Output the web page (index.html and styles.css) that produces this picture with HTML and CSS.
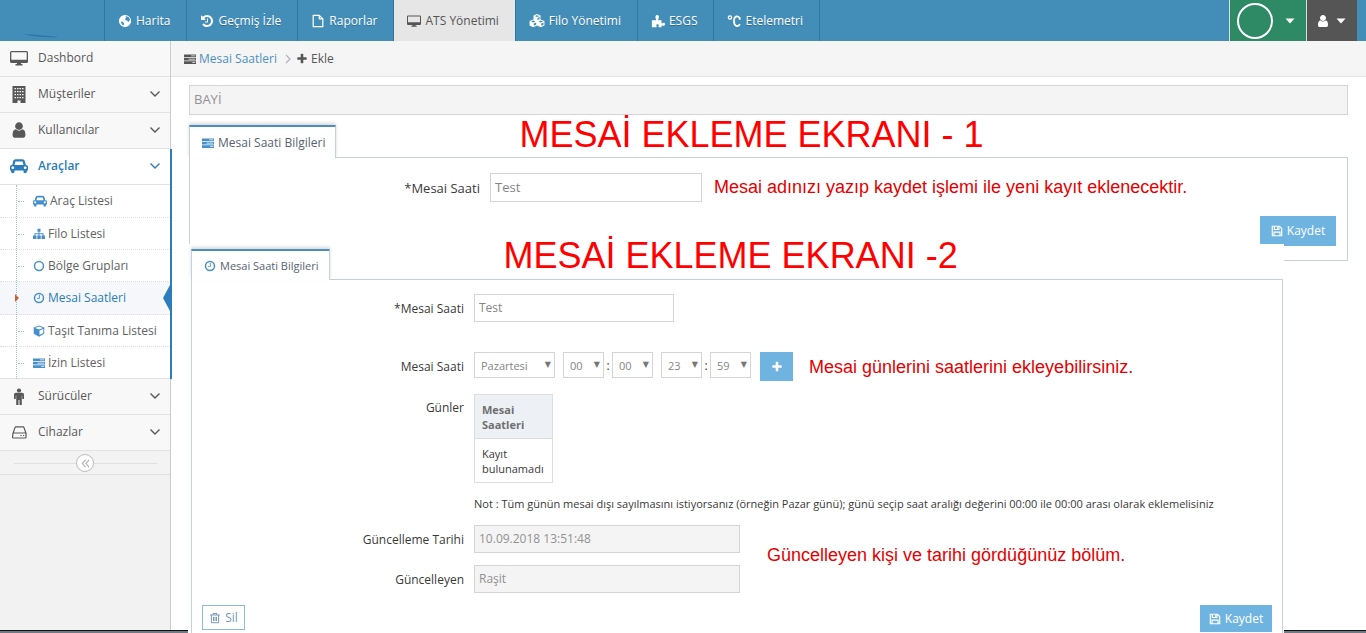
FILE: index.html
```html
<!DOCTYPE html>
<html lang="tr">
<head>
<meta charset="utf-8">
<title>Mesai Saatleri</title>
<link rel="stylesheet" href="styles.css">
</head>
<body>
<svg class="sprite" aria-hidden="true">
  <symbol id="globe" viewBox="0 0 16 16"><path fill-rule="evenodd" d="M8 1a7 7 0 1 0 0 14A7 7 0 0 0 8 1zM8.500 2.300l3.500 1.200 1.700 2.500-.7 2-1.500 1-1-1.500-2-.5-.5-1.500 1.500-1zM3 8.500l2.500.5 1.500 1.500-.5 2.500-2-1z"/></symbol>
  <symbol id="history" viewBox="0 0 1792 1792"><path d="M1664 896q0 156-61 298t-164 245-245 164-298 61q-172 0-327-72.500t-264-204.500q-7-10-6.500-22.500t8.500-20.500l137-138q10-9 25-9 16 2 23 12 73 95 179 147t225 52q104 0 198.500-40.500t163.500-109.500 109.500-163.500 40.500-198.500-40.500-198.500-109.500-163.500-163.500-109.500-198.500-40.500q-98 0-188 35.500t-160 101.500l137 138q31 30 14 69-17 40-59 40h-448q-26 0-45-19t-19-45v-448q0-42 40-59 39-17 69 14l130 129q107-101 244.500-156.500t284.500-55.500q156 0 298 61t245 164 164 245 61 298zm-640-288v448q0 14-9 23t-23 9h-320q-14 0-23-9t-9-23v-64q0-14 9-23t23-9h224v-352q0-14 9-23t23-9h64q14 0 23 9t9 23z"/></symbol>
  <symbol id="file" viewBox="0 0 16 16"><path d="M2.500 1.500h7l4 4v9h-11zM9.500 1.500v4h4" fill="none" stroke="currentColor" stroke-width="1.400" stroke-linejoin="round"/></symbol>
  <symbol id="desktop" viewBox="0 0 18 16"><path fill-rule="evenodd" d="M1.500 1h15A1.500 1.500 0 0 1 18 2.500v9a1.500 1.500 0 0 1-1.500 1.500H11v1h1.500v1.500h-7V14H7v-1H1.500A1.500 1.500 0 0 1 0 11.500v-9A1.500 1.500 0 0 1 1.500 1zM1.300 2.300v7.400h15.400V2.300z"/></symbol>
  <symbol id="cubes" viewBox="0 0 18 16"><path fill-rule="evenodd" d="M9 0l4 1.700v4.500l4.500 1.900v5L13.300 15 9 13.200 4.700 15 .5 13.100v-5L5 6.200V1.700zM9 1.300L6.500 2.400 9 3.400l2.500-1zM9.600 4.500v2.300L12 5.700V3.500zM4.700 7.500L2.200 8.600l2.500 1.100 2.500-1.100zM5.300 10.800v2.600L8 12.200V9.700zM13.300 7.500l-2.500 1.100 2.500 1.100 2.500-1.100zM13.900 10.800v2.600l2.500-1.200V9.700z"/></symbol>
  <symbol id="puzzle" viewBox="0 0 16 16"><path d="M1 7h4.500c.8 0 .4-1 0-1.700C4.600 3.500 5 1 7 1s2.500 2.500 1.600 4.300c-.3.700-.7 1.700.2 1.700H12v3c0 .9 1 .6 1.700.3 1-.5 2.300 0 2.300 1.500s-1.300 2-2.300 1.500c-.7-.3-1.700-.4-1.700.5V15H9c-.8 0-.5-.8-.2-1.500.4-1-.2-1.800-1.300-1.800s-1.800.8-1.300 1.800c.3.700.6 1.500-.3 1.500H1z"/></symbol>
  <symbol id="celsius" viewBox="0 0 16 16"><g fill="none" stroke="currentColor"><circle cx="3.400" cy="4" r="1.900" stroke-width="1.500"/><path d="M14.500 6.500V3.800M14.500 5.500C13.800 1.500 8 1.500 8 8s5 7 6.800 3.500" stroke-width="2"/></g></symbol>
  <symbol id="user" viewBox="0 0 1792 1792"><path d="M1536 1399q0 109-62.500 187t-150.500 78h-854q-88 0-150.500-78t-62.500-187q0-85 8.500-160.500t31.500-152 58.500-131 94-89 134.500-34.500q131 128 313 128t313-128q76 0 134.500 34.500t94 89 58.500 131 31.500 152 8.500 160.500zm-256-887q0 159-112.500 271.500t-271.500 112.500-271.500-112.500-112.500-271.500 112.500-271.500 271.500-112.500 271.500 112.500 112.500 271.500z"/></symbol>
  <symbol id="caret" viewBox="0 0 10 6"><path d="M.5 .5h9L5 5.500z"/></symbol>
  <symbol id="building" viewBox="0 0 16 18"><path fill-rule="evenodd" d="M1.500 1h13v17h-5v-2.500h-3V18h-5zM3.500 3v1.200H5V3zm2.500 0v1.200h1.500V3zm2.500 0v1.200H10V3zM11 3v1.200h1.500V3zM3.500 6v1.200H5V6zM6 6v1.200h1.500V6zm2.500 0v1.200H10V6zM11 6v1.200h1.500V6zM3.500 9v1.200H5V9zM6 9v1.200h1.500V9zm2.500 0v1.200H10V9zM11 9v1.200h1.500V9zm-7.500 3v1.200H5V12zM6 12v1.200h1.500V12zm2.500 0v1.200H10V12zm2.500 0v1.200h1.500V12z"/></symbol>
  <symbol id="car" viewBox="0 0 2048 1792"><path d="M480 1088q0-66-47-113t-113-47-113 47-47 113 47 113 113 47 113-47 47-113zm36-320h1016l-89-357q-2-8-14-17.500t-21-9.500h-768q-9 0-21 9.500t-14 17.500zm1372 320q0-66-47-113t-113-47-113 47-47 113 47 113 113 47 113-47 47-113zm160-96v384q0 14-9 23t-23 9h-96v128q0 80-56 136t-136 56-136-56-56-136v-128h-1024v128q0 80-56 136t-136 56-136-56-56-136v-128h-96q-14 0-23-9t-9-23v-384q0-93 65.500-158.500t158.500-65.500h28l105-419q23-94 104-157.500t179-63.500h768q98 0 179 63.500t104 157.500l105 419h28q93 0 158.500 65.500t65.500 158.500z"/></symbol>
  <symbol id="sitemap" viewBox="0 0 16 16"><path d="M6 1h4v4H8.600v2H14v3h2v4.500h-4.600V10h1.400V8.200H8.600V10h1.700v4.500H5.700V10h1.700V8.200H3.200V10h1.400v4.500H0V10h2V7h5.400V5H6z"/></symbol>
  <symbol id="circle" viewBox="0 0 16 16"><circle cx="8" cy="8" r="6" fill="none" stroke="currentColor" stroke-width="2"/></symbol>
  <symbol id="clock" viewBox="0 0 16 16"><g fill="none" stroke="currentColor"><circle cx="8" cy="8" r="6" stroke-width="2"/><path d="M8.500 4v4.700H5.500" stroke-width="1.200"/></g></symbol>
  <symbol id="cube" viewBox="0 0 16 16"><path fill-rule="evenodd" d="M8 .5l7 2.700v8.600l-7 3.700-7-3.700V3.200zM8 1.900L2.800 3.900 8 5.900l5.200-2zM8.700 7.200v6.200l5-2.600V5.300z"/></symbol>
  <symbol id="tasks" viewBox="0 0 16 16"><path fill-rule="evenodd" d="M0 2h16v3.500H0zM9.500 3.300v1h5.500v-1zM0 6.500h16V10H0zM6 7.800v1h9v-1zM0 11h16v3.500H0zM11 12.300v1h4v-1z"/></symbol>
  <symbol id="male" viewBox="0 0 16 18"><circle cx="8" cy="3.500" r="2.100"/><path d="M5 5.800h6c1.200 0 2 .8 2 2V12h-1.800V8.500h-.4V18H8.500v-5h-1v5H5.200V8.500h-.4V12H3V7.800c0-1.200.8-2 2-2z"/></symbol>
  <symbol id="hdd" viewBox="0 0 18 18"><path d="M3 10.200L5 4.600q.2-.7 1-.7h7q.8 0 1 .7l2 5.600v4q0 .8-.8.800H3.300q-.8 0-.8-.8zM3 10h13M10.500 12.500h1.200M13 12.500h1.200" fill="none" stroke="currentColor" stroke-width="1.200"/></symbol>
  <symbol id="down" viewBox="0 0 12 8"><path d="M1.500 1.500L6 6l4.500-4.500" fill="none" stroke="currentColor" stroke-width="1.400"/></symbol>
  <symbol id="plus" viewBox="0 0 1792 1792"><path d="M1600 736v192q0 40-28 68t-68 28h-416v416q0 40-28 68t-68 28h-192q-40 0-68-28t-28-68v-416h-416q-40 0-68-28t-28-68v-192q0-40 28-68t68-28h416v-416q0-40 28-68t68-28h192q40 0 68 28t28 68v416h416q40 0 68 28t28 68z"/></symbol>
  <symbol id="right" viewBox="0 0 6 10"><path d="M1 1l4 4-4 4" fill="none" stroke="currentColor" stroke-width="1.300"/></symbol>
  <symbol id="dleft" viewBox="0 0 10 10"><path d="M5 1L1.500 5 5 9M9 1L5.500 5 9 9" fill="none" stroke="currentColor" stroke-width="1.200"/></symbol>
  <symbol id="save" viewBox="0 0 16 16"><path d="M1.700 1.700h9.600l3 3v9.600H1.700zM4.500 2v4h6V2M4 14V9.500h8V14M8.700 3v2" fill="none" stroke="currentColor" stroke-width="1.500"/></symbol>
  <symbol id="trash" viewBox="0 0 16 16"><path d="M1.500 4h13M5.500 4V2h5v2M3.200 4v10.300h9.600V4M6 6.500v5.500M8 6.500v5.500M10 6.500v5.500" fill="none" stroke="currentColor" stroke-width="1.300"/></symbol>
</svg>

<header class="topbar">
  <a class="brand" href="#" aria-label="Ana sayfa"><svg viewBox="0 0 36 4"><path d="M0 0q16 1 36 3q-20 1-36-3z" fill="#2f74a3"/></svg></a>
  <nav class="menu">
    <a href="#"><svg class="icon"><use href="#globe"/></svg>Harita</a>
    <a href="#"><svg class="icon"><use href="#history"/></svg>Geçmiş İzle</a>
    <a href="#"><svg class="icon"><use href="#file"/></svg>Raporlar</a>
    <a href="#" class="current"><svg class="icon"><use href="#desktop"/></svg>ATS Yönetimi</a>
    <a href="#"><svg class="icon wide"><use href="#cubes"/></svg>Filo Yönetimi</a>
    <a href="#"><svg class="icon"><use href="#puzzle"/></svg>ESGS</a>
    <a href="#"><svg class="icon"><use href="#celsius"/></svg>Etelemetri</a>
  </nav>
  <div class="account">
    <button type="button" class="company" aria-label="Firma"><span class="ring"></span><svg class="caret"><use href="#caret"/></svg></button>
    <button type="button" class="profile" aria-label="Profil"><svg class="icon"><use href="#user"/></svg><svg class="caret"><use href="#caret"/></svg></button>
  </div>
</header>

<div class="shell">
  <aside class="sidebar">
    <nav>
      <a class="item" href="#"><svg class="icon big"><use href="#desktop"/></svg><span>Dashbord</span></a>
      <a class="item" href="#"><svg class="icon big"><use href="#building"/></svg><span>Müşteriler</span><svg class="arrow"><use href="#down"/></svg></a>
      <a class="item" href="#"><svg class="icon big"><use href="#user"/></svg><span>Kullanıcılar</span><svg class="arrow"><use href="#down"/></svg></a>
      <div class="group">
        <a class="item open" href="#"><svg class="icon big"><use href="#car"/></svg><span>Araçlar</span><svg class="arrow"><use href="#down"/></svg></a>
        <div class="sub">
          <a href="#"><svg class="icon"><use href="#car"/></svg>Araç Listesi</a>
          <a href="#"><svg class="icon small"><use href="#sitemap"/></svg>Filo Listesi</a>
          <a href="#"><svg class="icon small"><use href="#circle"/></svg>Bölge Grupları</a>
          <a href="#" class="active"><svg class="icon small"><use href="#clock"/></svg>Mesai Saatleri</a>
          <a href="#"><svg class="icon small"><use href="#cube"/></svg>Taşıt Tanıma Listesi</a>
          <a href="#"><svg class="icon small"><use href="#tasks"/></svg>İzin Listesi</a>
        </div>
      </div>
      <a class="item" href="#"><svg class="icon big"><use href="#male"/></svg><span>Sürücüler</span><svg class="arrow"><use href="#down"/></svg></a>
      <a class="item" href="#"><svg class="icon big"><use href="#hdd"/></svg><span>Cihazlar</span><svg class="arrow"><use href="#down"/></svg></a>
    </nav>
    <div class="collapse"><button type="button" aria-label="Menüyü daralt"><svg><use href="#dleft"/></svg></button></div>
  </aside>

  <main class="main">
    <nav class="crumbs">
      <svg class="icon small"><use href="#tasks"/></svg><a href="#">Mesai Saatleri</a>
      <svg class="sep"><use href="#right"/></svg>
      <svg class="icon small"><use href="#plus"/></svg><span>Ekle</span>
    </nav>
    <div class="content">
      <input class="dealer" type="text" value="BAYİ" aria-label="Bayi" disabled>

      <section class="screen first">
        <div class="tabs">
          <button type="button" class="tab"><svg class="icon small"><use href="#tasks"/></svg>Mesai Saati Bilgileri</button>
          <h1 class="title">MESAİ EKLEME EKRANI - 1</h1>
        </div>
        <form class="panel">
          <div class="row">
            <label for="name1">*Mesai Saati</label>
            <input id="name1" class="name" type="text" value="Test">
            <p class="note">Mesai adınızı yazıp kaydet işlemi ile yeni kayıt eklenecektir.</p>
          </div>
          <div class="actions"><button type="button" class="save"><svg class="icon small"><use href="#save"/></svg>Kaydet</button></div>
        </form>
      </section>

      <section class="screen second">
        <div class="tabs">
          <button type="button" class="tab"><svg class="icon small"><use href="#clock"/></svg>Mesai Saati Bilgileri</button>
          <h2 class="title">MESAİ EKLEME EKRANI -2</h2>
        </div>
        <form class="panel">
          <div class="row">
            <label for="name2">*Mesai Saati</label>
            <input id="name2" class="name" type="text" value="Test">
          </div>
          <div class="row hours">
            <label for="day">Mesai Saati</label>
            <div class="times">
              <span class="pick day"><select id="day"><option>Pazartesi</option></select></span>
              <span class="pick"><select aria-label="Başlangıç saati"><option>00</option></select></span>
              <span class="colon">:</span>
              <span class="pick"><select aria-label="Başlangıç dakikası"><option>00</option></select></span>
              <span class="pick end"><select aria-label="Bitiş saati"><option>23</option></select></span>
              <span class="colon">:</span>
              <span class="pick"><select aria-label="Bitiş dakikası"><option>59</option></select></span>
            </div>
            <button type="button" class="add" aria-label="Ekle"><svg class="icon small"><use href="#plus"/></svg></button>
            <p class="note">Mesai günlerini saatlerini ekleyebilirsiniz.</p>
          </div>
          <div class="row days">
            <span class="label">Günler</span>
            <table>
              <thead><tr><th>Mesai Saatleri</th></tr></thead>
              <tbody><tr><td>Kayıt bulunamadı</td></tr></tbody>
            </table>
          </div>
          <p class="hint">Not : Tüm günün mesai dışı sayılmasını istiyorsanız (örneğin Pazar günü); günü seçip saat aralığı değerini 00:00 ile 00:00 arası olarak eklemelisiniz</p>
          <div class="updated">
            <div class="fields">
              <div class="row">
                <label for="date">Güncelleme Tarihi</label>
                <input id="date" type="text" value="10.09.2018 13:51:48" disabled>
              </div>
              <div class="row">
                <label for="by">Güncelleyen</label>
                <input id="by" type="text" value="Raşit" disabled>
              </div>
            </div>
            <p class="note">Güncelleyen kişi ve tarihi gördüğünüz bölüm.</p>
          </div>
          <div class="actions">
            <button type="button" class="delete"><svg class="icon small"><use href="#trash"/></svg>Sil</button>
            <button type="button" class="save"><svg class="icon small"><use href="#save"/></svg>Kaydet</button>
          </div>
        </form>
      </section>
    </div>
  </main>
</div>
</body>
</html>
```
FILE: styles.css
```css
* { box-sizing: border-box; }
body {
  margin: 0;
  min-height: 100vh;
  display: flex;
  flex-direction: column;
  font: 12px/20px "Open Sans", sans-serif;
  color: #393939;
  background: #fff;
}
a { color: inherit; text-decoration: none; }
button, input, select { font: inherit; border-radius: 0; margin: 0; }
p, h1, h2 { margin: 0; }
.sprite { position: absolute; width: 0; height: 0; }
svg { fill: currentColor; flex: none; }
.icon { width: 14px; height: 14px; }
.icon.wide { width: 16px; }
.icon.big { width: 18px; height: 18px; }
.icon.small { width: 12px; height: 12px; }

/* Top bar */
.topbar { display: flex; height: 41px; background: #438eb9; color: #fff; }
.brand { width: 104px; padding: 34px 0 0 23px; }
.brand svg { display: block; width: 36px; height: 4px; }
.menu { display: flex; border-left: 1px solid #2f76a0; }
.menu a {
  display: flex;
  align-items: center;
  gap: 4px;
  padding: 0 16px 0 13px;
  border-right: 1px solid #2f76a0;
  text-shadow: 0 1px 0 rgba(0, 0, 0, .25);
}
.menu a.current { background: #e6e6e6; color: #555; text-shadow: none; }
.account { display: flex; margin-left: auto; padding-right: 9px; }
.account button {
  display: flex;
  align-items: center;
  border: 0;
  border-left: 1px solid #ddd;
  color: #fff;
}
.company { width: 77px; gap: 12px; padding: 0 0 0 7px; background: #2e8965; }
.profile { width: 51px; gap: 6px; padding: 0 0 0 9px; background: #555; }
.ring { width: 36px; height: 36px; border: 2px solid #fff; border-radius: 50%; }
.caret { width: 10px; height: 6px; }

/* Sidebar */
.shell { display: flex; flex: 1; position: relative; }
.shell::after {
  content: "";
  position: absolute;
  inset: auto 0 0 0;
  height: 2px;
  background: #707984;
  border-top: 1px solid #111;
}
.sidebar { width: 171px; flex: none; background: #f2f2f2; border-right: 1px solid #ccc; color: #585858; }
.item {
  display: flex;
  align-items: center;
  gap: 10px;
  height: 36px;
  padding: 0 9px 2px 10px;
  background: #f8f8f8;
  border-bottom: 1px solid #e2e2e2;
}
.item span { flex: 1; }
.arrow { width: 12px; height: 8px; }
.group { margin-right: -2px; border-right: 2px solid #2b7dbc; background: #fff; position: relative; }
.item.open { background: #fff; color: #2b7dbc; font-weight: 600; }
.sub { position: relative; }
.sub::before {
  content: "";
  position: absolute;
  inset: 0 auto 0 16px;
  border-left: 1px dotted #9dbdd6;
  z-index: 1;
}
.sub a {
  display: flex;
  align-items: center;
  gap: 3px;
  height: 32px;
  padding-left: 33px;
  border-bottom: 1px dotted #ddd;
  color: #616161;
  position: relative;
  white-space: nowrap;
}
.sub a::before { content: ""; position: absolute; left: 18px; top: 16px; width: 6px; border-top: 1px dotted #9dbdd6; }
.sub .icon { color: #478fca; }
.sub a:first-child { height: 33px; }
.sub a:last-child { border-bottom: 1px solid #e2e2e2; }
.sub a.active { height: 33px; background: #f5f7fa; color: #2b7dbc; }
.sub a.active::before { left: 15px; top: 12px; width: 0; border: 4px solid transparent; border-left-color: #c86139; border-right: 0; z-index: 2; }
.sub a.active::after { content: ""; position: absolute; right: 0; top: 3px; border: 13px solid transparent; border-right: 7px solid #2b7dbc; border-left: 0; }
.collapse { display: flex; justify-content: center; height: 24px; border-bottom: 1px solid #e0e0e0; background: linear-gradient(#e0e0e0, #e0e0e0) center 12px / 143px 1px no-repeat #f3f3f3; }
.collapse button { display: grid; place-items: center; width: 18px; height: 18px; margin-top: 3px; padding: 0; border: 1px solid #bbb; border-radius: 50%; background: #fff; color: #aaa; }
.collapse svg { width: 9px; height: 9px; }

/* Main column */
.main { flex: 1; min-width: 0; display: flex; flex-direction: column; }
.crumbs { display: flex; align-items: center; height: 36px; padding-left: 13px; gap: 3px; background: #f5f5f5; border-bottom: 1px solid #e5e5e5; color: #555; }
.crumbs a { color: #4c8fbd; }
.crumbs .sep { width: 6px; height: 10px; margin: 0 2px 0 5px; color: #b2b6bf; }
.content { flex: 1; display: flex; flex-direction: column; padding: 8px 18px 0; }
input { border: 1px solid #d5d5d5; padding: 0 4px 2px; color: #858585; background: #fff; }
input:disabled { color: #939192; background: #f4f4f4; }
.dealer { height: 30px; width: 100%; flex: none; font-size: 13px; }

.tabs { display: flex; align-items: flex-start; }
.tab {
  display: flex;
  align-items: center;
  gap: 4px;
  margin-bottom: -1px;
  border: 1px solid #c5d0dc;
  border-top: 2px solid #4c8fbd;
  border-bottom: 0;
  background: #fff;
  color: #576373;
  box-shadow: 0 -2px 3px rgba(0, 0, 0, .15);
  white-space: nowrap;
  z-index: 1;
}
.tab .icon { color: #478fca; }
.title { font: 36px/36px "Liberation Sans", Arial, sans-serif; color: #f00; white-space: nowrap; }
.note { font: 18px/20px "Liberation Sans", Arial, sans-serif; color: #e60000; white-space: nowrap; }
.panel { border: 1px solid #c5d0dc; background: #fff; }
.row { display: flex; align-items: center; }
.row label, .row .label { flex: none; text-align: right; }
.actions { display: flex; }
.save, .delete, .add { display: flex; align-items: center; justify-content: center; gap: 4px; border: 0; color: #fff; background: #6fb3e0; padding: 0; }

/* First screen */
.first { margin-top: 2px; }
.first .tabs { height: 40px; align-items: flex-end; }
.first .tab { height: 33px; padding: 0 10px 0 12px; }
.first .title { margin-left: 183px; align-self: flex-start; }
.first .panel { height: 104px; padding: 15px 11px 0 0; }
.first .row { font-size: 13px; }
.first .row label { width: 290px; margin-right: 10px; }
.first .name { width: 212px; height: 29px; margin-right: 12px; }
.first .note { padding-bottom: 2px; }
.first .actions { justify-content: flex-end; margin-top: 14px; }
.first .save { width: 76px; height: 30px; }

/* Second screen, laid over the lower edge of the first */
.second {
  position: relative;
  z-index: 2;
  flex: 1;
  display: flex;
  flex-direction: column;
  margin: -17px 64px 0 -1px;
  padding: 0 1px 0 3px;
  background: #fff;
  line-height: 15px;
}
.second .tabs { height: 35px; align-items: flex-end; }
.second .tab { height: 31px; padding: 0 10px 0 12px; font-size: 11px; }
.second .title { margin-left: 174px; align-self: flex-start; margin-top: -6px; }
.second .panel { flex: 1; border-bottom: 0; padding: 14px 10px 0; display: flex; flex-direction: column; }
.second .row label, .second .row .label { width: 262px; margin-right: 10px; }
.second input { height: 28px; }
.second .name { width: 200px; }
.second .hours { margin-top: 30px; }
.times { display: flex; align-items: center; align-self: flex-start; }
.pick { position: relative; width: 41px; height: 26px; }
.pick::after { content: "▼"; position: absolute; right: 4px; top: 6px; font: 8px/14px "DejaVu Sans", sans-serif; color: #777; pointer-events: none; }
.pick select { appearance: none; width: 100%; height: 100%; padding: 0 6px; border: 1px solid #d5d5d5; background: #fff; color: #858585; font-size: 11px; }
.pick.day { width: 81px; margin-right: 8px; }
.pick.end { margin-left: 8px; }
.colon { width: 8px; text-align: center; }
.add { width: 33px; height: 29px; margin: 0 16px 0 9px; }
.second .days { align-items: flex-start; margin-top: 13px; }
.days .label { padding-top: 6px; }
table { border-collapse: collapse; width: 79px; font-size: 11px; }
th, td { border: 1px solid #ddd; padding: 7px 7px 6px; text-align: left; }
th { background: #edf1f6; color: #707070; font-weight: 700; }
.hint { margin: 13px 0 14px 272px; font-size: 11px; white-space: nowrap; }
.updated { display: flex; align-items: center; }
.updated .note { margin-left: 27px; padding-bottom: 8px; }
.fields { display: grid; gap: 12px; }
.fields input { width: 266px; }
.second .actions { justify-content: space-between; margin-top: 12px; }
.second .delete { width: 43px; height: 25px; border: 1px solid #8fbcd9; background: #fff; color: #7399b8; }
.second .save { width: 72px; height: 27px; }
```
